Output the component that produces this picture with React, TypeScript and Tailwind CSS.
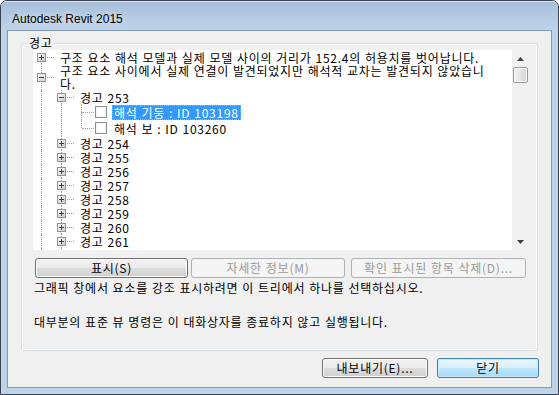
import React from "react";

type RowDef = {
  level: number;
  lines: string[];
  exp?: "+" | "-";
  check?: boolean;
  selected?: boolean;
  hClass: string;
  top: boolean;
  bottom: boolean;
};

const rows: RowDef[] = [
  {
    level: 0,
    lines: ["구조 요소 해석 모델과 실제 모델 사이의 거리가 152.4의 허용치를 벗어납니다."],
    exp: "+",
    hClass: "h-[14px]",
    top: false,
    bottom: true,
  },
  {
    level: 0,
    lines: ["구조 요소 사이에서 실제 연결이 발견되었지만 해석적 교차는 발견되지 않았습니", "다."],
    exp: "-",
    hClass: "h-[26px]",
    top: true,
    bottom: true,
  },
  { level: 1, lines: ["경고 253"], exp: "-", hClass: "h-[14px]", top: true, bottom: true },
  {
    level: 2,
    lines: ["해석 기둥 : ID 103198"],
    check: true,
    selected: true,
    hClass: "h-[16px]",
    top: true,
    bottom: true,
  },
  { level: 2, lines: ["해석 보 : ID 103260"], check: true, hClass: "h-[16px]", top: true, bottom: false },
  ...["254", "255", "256", "257", "258", "259", "260", "261", "262"].map(
    (n): RowDef => ({ level: 1, lines: ["경고 " + n], exp: "+", hClass: "h-[14px]", top: true, bottom: true })
  ),
];

function Expander({ open }: { open: boolean }) {
  return (
    <svg width="9" height="9" viewBox="0 0 9 9" className="block">
      <defs>
        <linearGradient id="expg" x1="0" y1="0" x2="1" y2="1">
          <stop offset="0" stopColor="#ffffff" />
          <stop offset="1" stopColor="#c9c9c9" />
        </linearGradient>
      </defs>
      <rect x="0.5" y="0.5" width="8" height="8" fill="url(#expg)" stroke="#929292" />
      <rect x="2" y="4" width="5" height="1" fill="#23407a" />
      {!open && <rect x="4" y="2" width="1" height="5" fill="#23407a" />}
    </svg>
  );
}

function TreeRow({ r }: { r: RowDef }) {
  return (
    <div className={"flex items-stretch " + r.hClass}>
      {Array.from({ length: r.level }).map((_, i) => (
        <div key={i} className="relative w-[20px] shrink-0">
          <div className="absolute left-[8px] top-0 bottom-0 border-l border-dotted border-[#a0a0a0]" />
        </div>
      ))}
      <div className="relative w-[20px] shrink-0">
        {r.top && <div className="absolute left-[8px] top-0 h-1/2 border-l border-dotted border-[#a0a0a0]" />}
        {r.bottom && (
          <div className="absolute left-[8px] top-1/2 bottom-0 border-l border-dotted border-[#a0a0a0]" />
        )}
        <div className="absolute left-[9px] top-1/2 w-[12px] border-t border-dotted border-[#a0a0a0]" />
        {r.exp && (
          <div className="absolute left-[4px] top-1/2 -mt-[4px]">
            <Expander open={r.exp === "-"} />
          </div>
        )}
      </div>
      <div className="flex items-center">
        {r.check && (
          <div className="ml-[2px] w-[12px] h-[12px] border border-[#8e8f8f] bg-white shadow-[inset_0_0_0_1px_#f2f2f2]" />
        )}
        <div className="ml-[5px]">
          {r.lines.map((l, i) =>
            r.selected ? (
              <div
                key={i}
                className="px-[2px] h-[15px] leading-[15px] whitespace-nowrap bg-[#3399ff] text-white outline outline-1 outline-dotted outline-[#f0a050] -outline-offset-1"
              >
                {l}
              </div>
            ) : (
              <div key={i} className="px-[2px] leading-[13px] whitespace-nowrap text-black">
                {l}
              </div>
            )
          )}
        </div>
      </div>
    </div>
  );
}

function Scrollbar() {
  return (
    <div className="w-[17px] h-full bg-[#f0f0f0] flex flex-col items-center">
      <div className="h-[17px] w-full flex items-center justify-center">
        <svg width="7" height="4" viewBox="0 0 7 4">
          <path d="M3.5 0 L7 4 L0 4 Z" fill="#3f3f3f" />
        </svg>
      </div>
      <div className="w-[15px] h-[16px] rounded-[2px] border border-[#979797] bg-[linear-gradient(to_right,#f3f3f3,#e4e4e4_50%,#d6d6d6)] shadow-[inset_0_0_0_1px_#fbfbfb]" />
      <div className="flex-1" />
      <div className="h-[17px] w-full flex items-center justify-center">
        <svg width="7" height="4" viewBox="0 0 7 4">
          <path d="M0 0 L7 0 L3.5 4 Z" fill="#3f3f3f" />
        </svg>
      </div>
    </div>
  );
}

const btnBase = "h-[20px] rounded-[3px] border text-[12px] flex items-center justify-center leading-[14px]";
const btnNormal =
  btnBase +
  " border-[#707070] bg-[linear-gradient(#f2f2f2_0%,#ebebeb_50%,#dddddd_50%,#cfcfcf_100%)] shadow-[inset_0_0_0_1px_#fcfcfc] text-black";
const btnDisabled = btnBase + " border-[#adb2b5] bg-[#f4f4f4] text-[#9a9a9a]";
const btnDefault =
  btnBase +
  " border-[#3c7fb1] bg-[linear-gradient(#eaf6fd_0%,#d9f0fc_50%,#bee6fd_50%,#a7d9f5_100%)] shadow-[inset_0_0_0_1px_#c6e9fc] text-black";

export default function App() {
  return (
    <div className="w-[559px] h-[395px] flex flex-col border border-[#3a4450] rounded-t-[7px] bg-[#bcd3ea] overflow-hidden font-['Noto_Sans_CJK_KR',sans-serif] text-[12px] tracking-[0.75px] [word-spacing:0.5px]">
      <div className="h-[29px] shrink-0 pl-[11px] pt-[8px] bg-[linear-gradient(to_bottom,#a7bfd9,#bcd3ea)] shadow-[inset_0_1px_0_#d7e4f2]">
        <span className="font-['Liberation_Sans',sans-serif] text-[12px] leading-[15px] text-black tracking-normal [word-spacing:0] [text-shadow:0_0_6px_rgba(255,255,255,0.9)]">
          Autodesk Revit 2015
        </span>
      </div>
      <div className="mx-[6px] h-[358px] shrink-0 border border-[#8497ad] bg-[#f0f0f0] flex flex-col">
        <div className="relative mt-[12px] ml-[13px] w-[517px] h-[308px] shrink-0 border border-[#d5dfe5] rounded-[3px] shadow-[inset_0_0_0_1px_#ffffff] flex flex-col">
          <div className="absolute left-[6px] -top-[8px] px-[1px] bg-[#f0f0f0] leading-[14px] text-black">경고</div>
          <div className="mt-[6px] ml-[11px] w-[496px] h-[200px] flex">
            <div className="w-[479px] h-full bg-white overflow-hidden">
              {rows.map((r, i) => (
                <TreeRow key={i} r={r} />
              ))}
            </div>
            <Scrollbar />
          </div>
          <div className="mt-[8px] ml-[13px] flex">
            <div className={btnNormal + " w-[153px]"}>표시(S)</div>
            <div className={btnDisabled + " w-[154px] ml-[3px]"}>자세한 정보(M)</div>
            <div className={btnDisabled + " w-[175px] ml-[6px]"}>확인 표시된 항목 삭제(D)...</div>
          </div>
          <div className="mt-[3px] ml-[12px] leading-[14px] text-black whitespace-nowrap">
            그래픽 창에서 요소를 강조 표시하려면 이 트리에서 하나를 선택하십시오.
          </div>
          <div className="mt-[20px] ml-[12px] leading-[14px] text-black whitespace-nowrap">
            대부분의 표준 뷰 명령은 이 대화상자를 종료하지 않고 실행됩니다.
          </div>
        </div>
        <div className="mt-[7px] flex justify-end gap-[9px] pr-[12px]">
          <div className={btnNormal + " w-[106px]"}>내보내기(E)...</div>
          <div className={btnDefault + " w-[102px]"}>닫기</div>
        </div>
      </div>
    </div>
  );
}
